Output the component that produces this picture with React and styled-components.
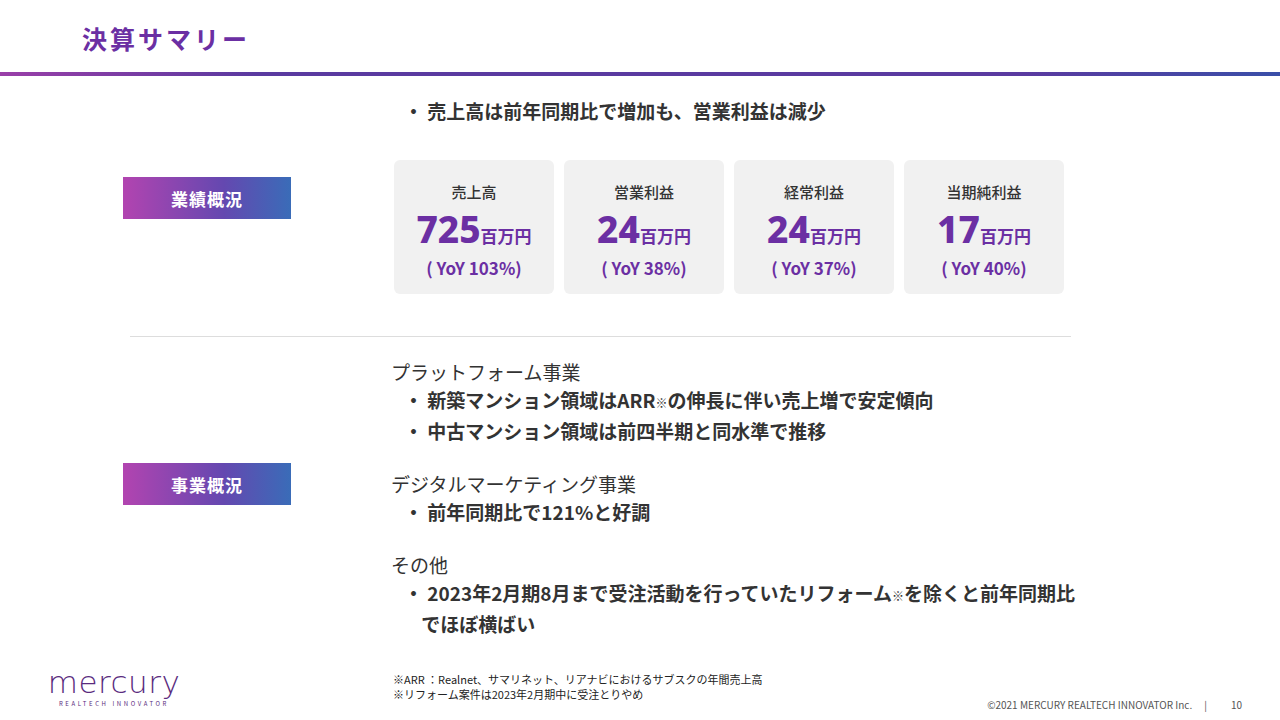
import React from 'react'
import styled, { createGlobalStyle } from 'styled-components'

const Global = createGlobalStyle`
  body { margin: 0; font-family: "Noto Sans CJK JP", "Noto Sans", sans-serif; color: #333; }
`

const purple = '#6b2fa3'

const cards = [
  { title: '売上高', value: '725', yoy: '( YoY 103%)' },
  { title: '営業利益', value: '24', yoy: '( YoY 38%)' },
  { title: '経常利益', value: '24', yoy: '( YoY 37%)' },
  { title: '当期純利益', value: '17', yoy: '( YoY 40%)' },
]

export default function App() {
  return (
    <Page>
      <Global />
      <Header>決算サマリー</Header>
      <HeaderLine />
      <Section>
        <LabelCol top={101}><Label>業績概況</Label></LabelCol>
        <Content>
          <Bullet>・ 売上高は前年同期比で増加も、営業利益は減少</Bullet>
          <Cards>
            {cards.map(c => (
              <Card key={c.title}>
                <CardTitle>{c.title}</CardTitle>
                <Value>{c.value}<Unit>百万円</Unit></Value>
                <Yoy>{c.yoy}</Yoy>
              </Card>
            ))}
          </Cards>
        </Content>
      </Section>
      <Divider />
      <Section>
        <LabelCol top={126}><Label>事業概況</Label></LabelCol>
        <Content>
          <Heading gap={21}>プラットフォーム事業</Heading>
          <Item>・ 新築マンション領域はARR<small>※</small>の伸長に伴い売上増で安定傾向</Item>
          <Item>・ 中古マンション領域は前四半期と同水準で推移</Item>
          <Heading gap={25}>デジタルマーケティング事業</Heading>
          <Item>・ 前年同期比で121%と好調</Item>
          <Heading gap={25}>その他</Heading>
          <Item>・ 2023年2月期8月まで受注活動を行っていたリフォーム<small>※</small>を除くと前年同期比<br />&nbsp;&nbsp;&nbsp;&nbsp;でほぼ横ばい</Item>
        </Content>
      </Section>
      <Footer>
        <Logo>
          <LogoWord>mercury</LogoWord>
          <LogoSub>REALTECH INNOVATOR</LogoSub>
        </Logo>
        <Notes>
          <div>※ARR ：Realnet、サマリネット、リアナビにおけるサブスクの年間売上高</div>
          <div>※リフォーム案件は2023年2月期中に受注とりやめ</div>
        </Notes>
        <Copy>©2021 MERCURY REALTECH INNOVATOR Inc.<Sep>|</Sep>10</Copy>
      </Footer>
    </Page>
  )
}

const Page = styled.div`
  width: 1280px; height: 720px; position: relative; overflow: hidden; background: #fff;
`
const Header = styled.h1`
  margin: 0; padding: 24px 0 0 82px; height: 49px; box-sizing: border-box;
  font-size: 25px; font-weight: 700; color: ${purple}; letter-spacing: 3px; line-height: 28px;
`
const HeaderLine = styled.div`
  margin-top: 23px; height: 4px;
  background: linear-gradient(90deg, #9a3fa8 0%, #5a3aa0 20%, #5a3aa0 80%, #3a4fa8 100%);
`
const Section = styled.div`display: flex; align-items: flex-start;`
const LabelCol = styled.div`width: 392px; padding-top: ${p => p.top}px; padding-left: 123px; box-sizing: border-box;`
const Label = styled.div`
  width: 168px; height: 42px; display: flex; align-items: center; justify-content: center;
  background: linear-gradient(90deg, #b244b0, #6448b0 60%, #3a6cb8);
  color: #fff; font-weight: 700; font-size: 17px; letter-spacing: 1px;
`
const Content = styled.div`display: flex; flex-direction: column;`
const Bullet = styled.div`margin: 21px 0 0 12px; font-size: 19px; font-weight: 700; height: 28px; line-height: 28px;`
const Cards = styled.div`display: flex; gap: 10px; margin-top: 35px; padding-left: 2px;`
const Card = styled.div`
  width: 160px; height: 134px; background: #f1f1f1; border-radius: 6px;
  display: flex; flex-direction: column; align-items: center; padding-top: 21px; box-sizing: border-box;
`
const CardTitle = styled.div`font-size: 15px; font-weight: 500; line-height: 22px;`
const Value = styled.div`color: ${purple}; font-weight: 800; font-size: 37px; line-height: 40px; margin-top: 6px; font-family: "Noto Sans", sans-serif;`
const Unit = styled.span`font-size: 17px; font-family: "Noto Sans CJK JP", sans-serif; font-weight: 700;`
const Yoy = styled.div`color: ${purple}; font-weight: 700; font-size: 17px; line-height: 24px;`
const Divider = styled.div`margin: 42px 0 0 130px; width: 941px; height: 1px; background: #ddd;`
const Heading = styled.div`margin-top: ${p => p.gap}px; margin-left: -1px; font-size: 19px; line-height: 28px; font-weight: 400;`
const Item = styled.div`
  margin-left: 12px; font-size: 19px; font-weight: 700; line-height: 28px;
  small { font-size: 12px; font-weight: 400; }
`
const Footer = styled.div`
  position: absolute; left: 0; right: 0; bottom: 0; height: 56px;
  display: flex; align-items: flex-start;
`
const Logo = styled.div`margin-left: 50px; margin-top: 6px; display: flex; flex-direction: column; align-items: center; width: 128px;`
const LogoWord = styled.div`color: #5a2b7e; font-size: 31px; line-height: 24px; font-family: "DejaVu Sans", sans-serif; letter-spacing: 0.5px; font-weight: 300;`
const LogoSub = styled.div`color: #5a2b7e; font-size: 6px; letter-spacing: 2.6px; margin-top: 5px; white-space: nowrap;`
const Notes = styled.div`margin-left: 215px; margin-top: 8px; font-size: 11px; line-height: 15px; color: #222;`
const Copy = styled.div`margin-left: auto; margin-right: 38px; margin-top: 33px; font-size: 10px; color: #555;`
const Sep = styled.span`margin: 0 24px 0 12px;`
